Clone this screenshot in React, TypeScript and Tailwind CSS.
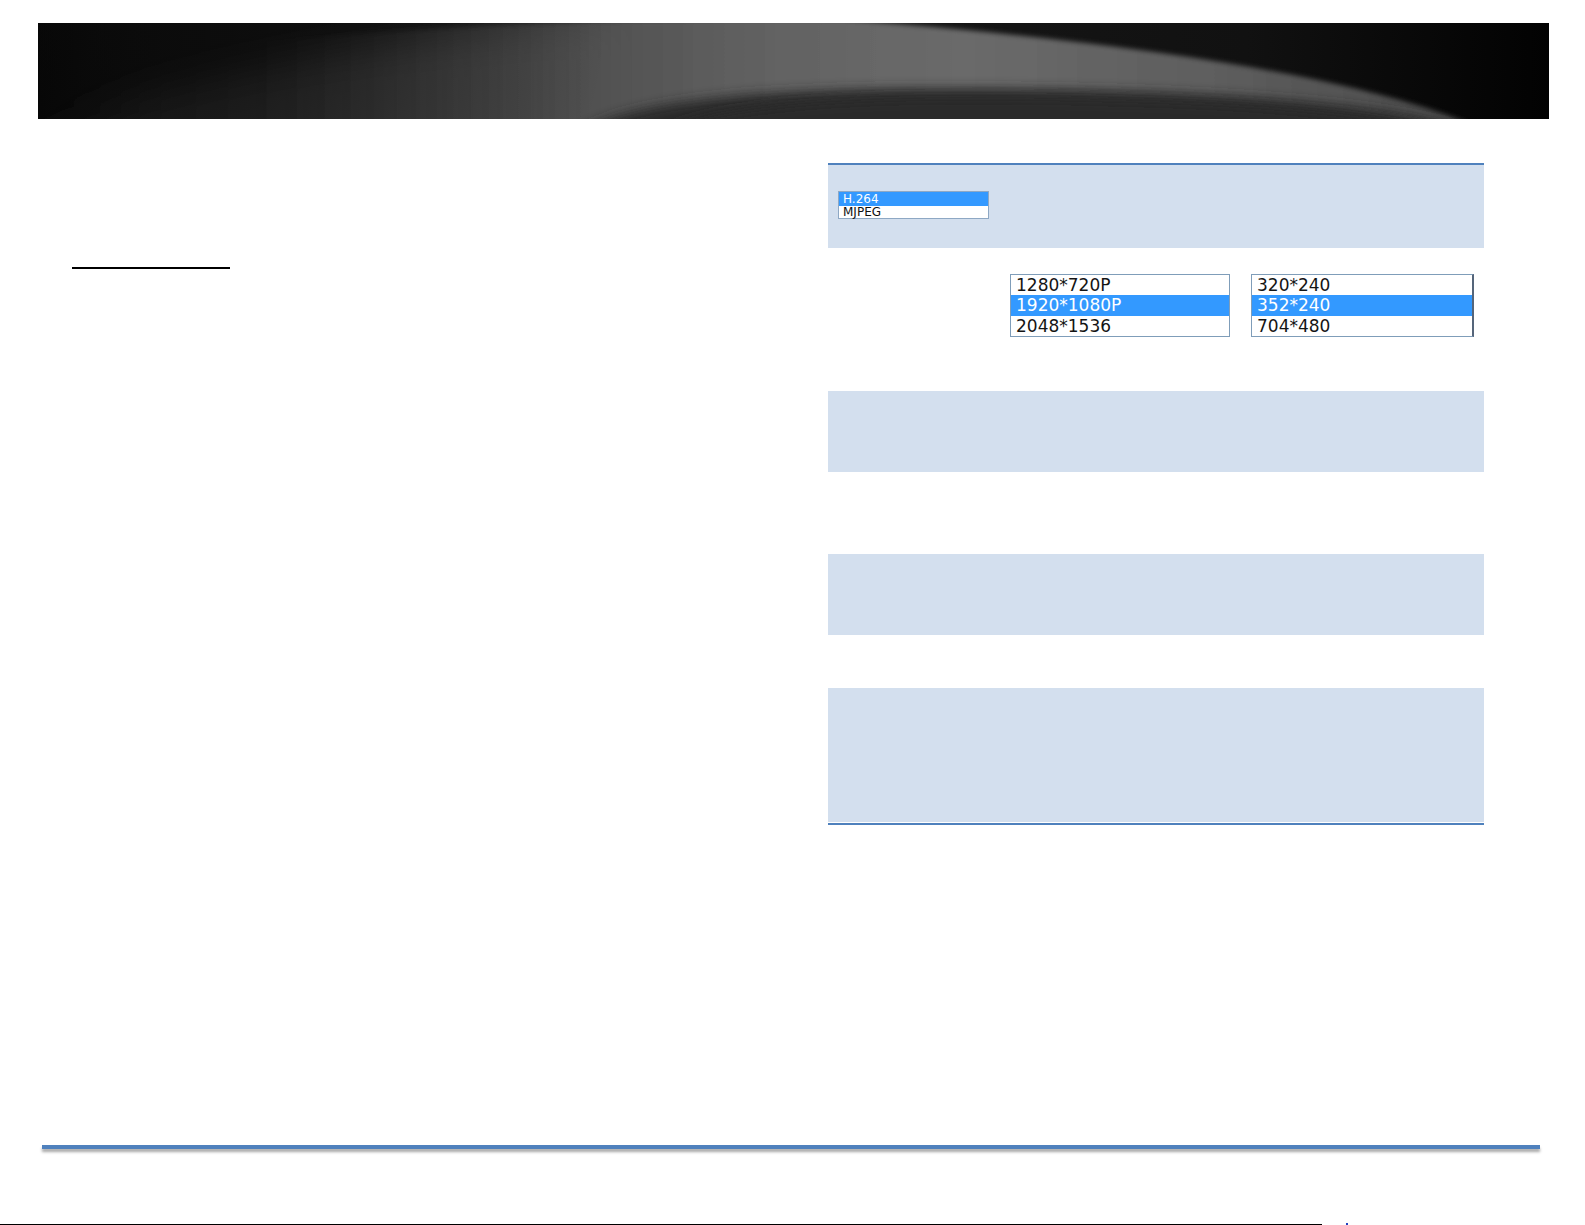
import React from "react";

function Header() {
  return (
    <svg width="1511" height="96" viewBox="0 0 1511 96" className="block">
      <defs>
        <linearGradient id="bg" x1="0" y1="0" x2="1511" y2="0" gradientUnits="userSpaceOnUse">
          <stop offset="0" stopColor="#030303" />
          <stop offset="0.15" stopColor="#0f0f0f" />
          <stop offset="0.55" stopColor="#161616" />
          <stop offset="0.8" stopColor="#111111" />
          <stop offset="1" stopColor="#020202" />
        </linearGradient>
        <linearGradient id="light" x1="0" y1="0" x2="1427" y2="0" gradientUnits="userSpaceOnUse">
          <stop offset="0" stopColor="#181818" stopOpacity="0.2" />
          <stop offset="0.08" stopColor="#282828" />
          <stop offset="0.22" stopColor="#3c3c3c" />
          <stop offset="0.38" stopColor="#4e4e4e" />
          <stop offset="0.52" stopColor="#636363" />
          <stop offset="0.65" stopColor="#6a6a6a" />
          <stop offset="0.82" stopColor="#5e5e5e" />
          <stop offset="1" stopColor="#4a4a4a" />
        </linearGradient>
        <linearGradient id="light2" x1="0" y1="0" x2="1427" y2="0" gradientUnits="userSpaceOnUse">
          <stop offset="0.15" stopColor="#3a3a3a" stopOpacity="0" />
          <stop offset="0.3" stopColor="#454545" stopOpacity="0.6" />
          <stop offset="0.42" stopColor="#555555" stopOpacity="1" />
          <stop offset="0.52" stopColor="#636363" />
          <stop offset="0.65" stopColor="#6a6a6a" />
          <stop offset="0.82" stopColor="#5e5e5e" />
          <stop offset="1" stopColor="#4a4a4a" />
        </linearGradient>
        <radialGradient id="tl" cx="150" cy="-20" r="420" gradientUnits="userSpaceOnUse">
          <stop offset="0" stopColor="#0c0c0c" stopOpacity="0.85" />
          <stop offset="0.6" stopColor="#0c0c0c" stopOpacity="0.3" />
          <stop offset="1" stopColor="#0c0c0c" stopOpacity="0" />
        </radialGradient>
        <filter id="soft" x="-10%" y="-50%" width="120%" height="200%">
          <feGaussianBlur stdDeviation="2.5" />
        </filter>
        <filter id="soft2" x="-10%" y="-50%" width="120%" height="200%">
          <feGaussianBlur stdDeviation="6" />
        </filter>
        <filter id="soft3" x="-20%" y="-100%" width="140%" height="300%">
          <feGaussianBlur stdDeviation="18" />
        </filter>
        <clipPath id="clip">
          <rect x="0" y="0" width="1511" height="96" />
        </clipPath>
      </defs>
      <g clipPath="url(#clip)">
        <rect x="0" y="0" width="1511" height="96" fill="url(#bg)" />
        <path
          d="M -40 140 L -40 110 C 120 60, 380 -8, 802 -4 L 802 140 Z"
          fill="url(#light)"
          filter="url(#soft3)"
        />
        <path
          d="M 200 110 L 200 20 C 450 0, 600 -6, 802 -4 Q 1262 32 1430 100 L 1430 110 Z"
          fill="url(#light2)"
          filter="url(#soft)"
        />
        <rect x="0" y="0" width="700" height="96" fill="url(#tl)" />
        <path
          d="M 540 110 C 600 72, 760 64, 960 66 C 1160 68, 1330 78, 1420 104 L 1420 110 Z"
          fill="#2c2c2c"
          filter="url(#soft2)"
        />
        <path
          d="M 620 110 C 680 82, 800 72, 980 74 C 1160 76, 1320 84, 1410 110 Z"
          fill="#2a2a2a"
          filter="url(#soft2)"
        />
      </g>
    </svg>
  );
}

function SmallList() {
  return (
    <div
      className="w-[151px] h-[28px] border border-[#8ea8c4] bg-white flex flex-col"
      style={{ fontFamily: '"DejaVu Sans", Verdana, sans-serif' }}
    >
      <div className="h-[14px] bg-[#3399ff] text-white text-[12px] leading-[14px] pl-[4px]">H.264</div>
      <div className="h-[12px] text-[#111111] text-[12px] leading-[13px] pl-[4px]">MJPEG</div>
    </div>
  );
}

function ResList({ items, selected, width, right }: { items: string[]; selected: number; width: string; right?: boolean }) {
  return (
    <div
      className={
        "h-[63px] border border-[#7f9db9] bg-white flex flex-col " +
        width +
        (right ? " border-r-[2px] border-r-[#55657a]" : "")
      }
      style={{ fontFamily: '"DejaVu Sans", Verdana, sans-serif' }}
    >
      {items.map((t, i) => (
        <div
          key={t}
          className={
            (i === 1 ? "h-[21px] " : "h-[20px] ") +
            "text-[17px] leading-[20px] pl-[5px] " +
            (i === selected ? "bg-[#3399ff] text-white" : "text-[#141414]")
          }
        >
          {t}
        </div>
      ))}
    </div>
  );
}

export default function App() {
  return (
    <div className="w-[1585px] h-[1225px] bg-white overflow-hidden flex flex-col">
      <div className="mt-[23px] ml-[38px] h-[96px]">
        <Header />
      </div>
      <div className="flex flex-row h-[706px]">
        <div className="w-[828px] pl-[72px] pt-[148px]">
          <div className="w-[158px] h-[2px] bg-black" />
        </div>
        <div className="w-[656px] pt-[44px] flex flex-col">
          <div className="h-[2px] bg-[#4f81bd]" />
          <div className="h-[83px] bg-[#d3dfee] pl-[10px] pt-[26px]">
            <SmallList />
          </div>
          <div className="h-[143px] bg-white pl-[182px] pt-[26px] flex flex-row gap-[21px]">
            <ResList items={["1280*720P", "1920*1080P", "2048*1536"]} selected={1} width="w-[220px]" />
            <ResList items={["320*240", "352*240", "704*480"]} selected={1} width="w-[223px]" right />
          </div>
          <div className="h-[81px] bg-[#d3dfee]" />
          <div className="h-[82px] bg-white" />
          <div className="h-[81px] bg-[#d3dfee]" />
          <div className="h-[53px] bg-white" />
          <div className="h-[134px] bg-[#d3dfee]" />
          <div className="h-[1px] bg-white" />
          <div className="h-[2px] bg-[#4f81bd]" />
        </div>
      </div>
      <div className="mt-[320px] ml-[42px] w-[1498px] h-[4px] bg-[#4f81bd] shadow-[0_3px_3px_rgba(0,0,0,0.35)]" />
      <div className="mt-[74px] flex flex-row items-end h-[2px]">
        <div className="w-[1322px] h-[1px] bg-black" />
        <div className="ml-[24px] w-[2px] h-[2px] bg-[#2040c0]" />
      </div>
    </div>
  );
}
